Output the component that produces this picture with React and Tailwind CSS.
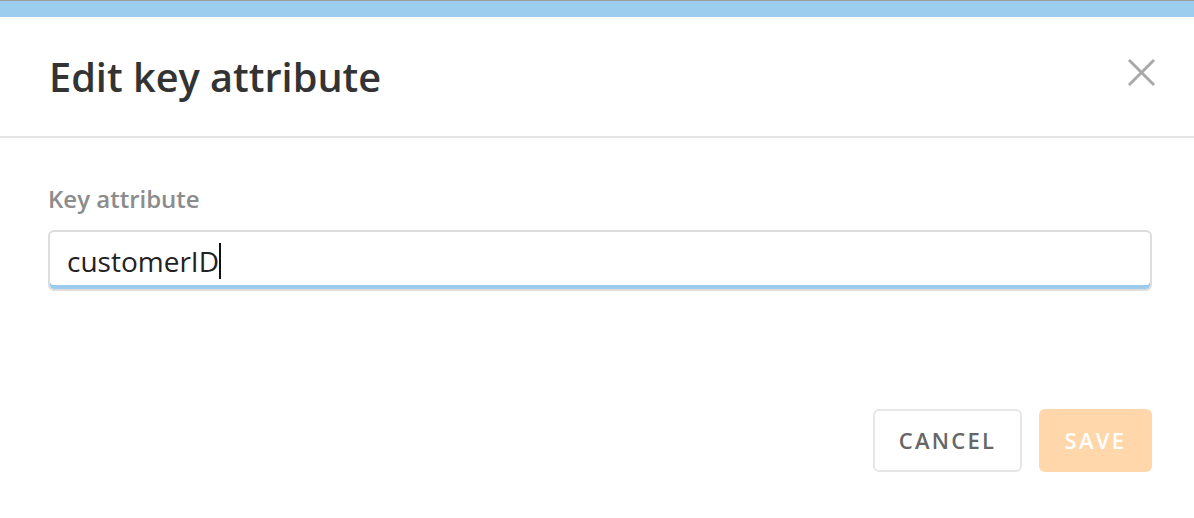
import React from "react";

export default function App() {
  return (
    <div
      className="w-[1194px] h-[518px] bg-white flex flex-col overflow-hidden"
      style={{ fontFamily: '"Open Sans", "Noto Sans", sans-serif' }}
    >
      <div className="h-px bg-[#9a9a9a]" />
      <div className="h-4 bg-[#9ccdee]" />
      <div className="h-[121px] flex items-start justify-between pl-[49px] pr-[38px] border-b-2 border-[#e5e5e5]">
        <h1 className="mt-[34px] text-[39.7px] leading-[52px] font-semibold text-[#333333]">
          Edit key attribute
        </h1>
        <button className="mt-[41px] w-[29px] h-[29px] flex items-center justify-center">
          <svg width="29" height="29" viewBox="0 0 29 29" fill="none">
            <path d="M2 2 L27 27 M27 2 L2 27" stroke="#a9a9a9" strokeWidth="3" />
          </svg>
        </button>
      </div>
      <div className="flex flex-col pl-[48px] pr-[42px] pt-[45px]">
        <label className="text-[24px] leading-[32px] font-semibold text-[#8c8c8c]">
          Key attribute
        </label>
        <div className="mt-[15px] h-[61px] border-2 border-[#dddddd] rounded-[6px] shadow-[inset_0_-4px_0_#9ccbee] flex items-center pl-[17px]">
          <span className="text-[28px] leading-[38px] text-[#222222]">customerID</span>
          <span className="w-[2px] h-[36px] bg-[#111111]" />
        </div>
      </div>
      <div className="flex justify-end gap-[17px] pr-[42px] mt-[118px]">
        <button className="w-[149px] h-[63px] border-2 border-[#e6e6e6] rounded-[6px] bg-white text-[22px] font-semibold tracking-[2.3px] text-[#666666]">
          CANCEL
        </button>
        <button className="w-[113px] h-[63px] rounded-[6px] bg-[#ffd7aa] text-[22px] font-semibold tracking-[2.3px] text-white">
          SAVE
        </button>
      </div>
    </div>
  );
}
